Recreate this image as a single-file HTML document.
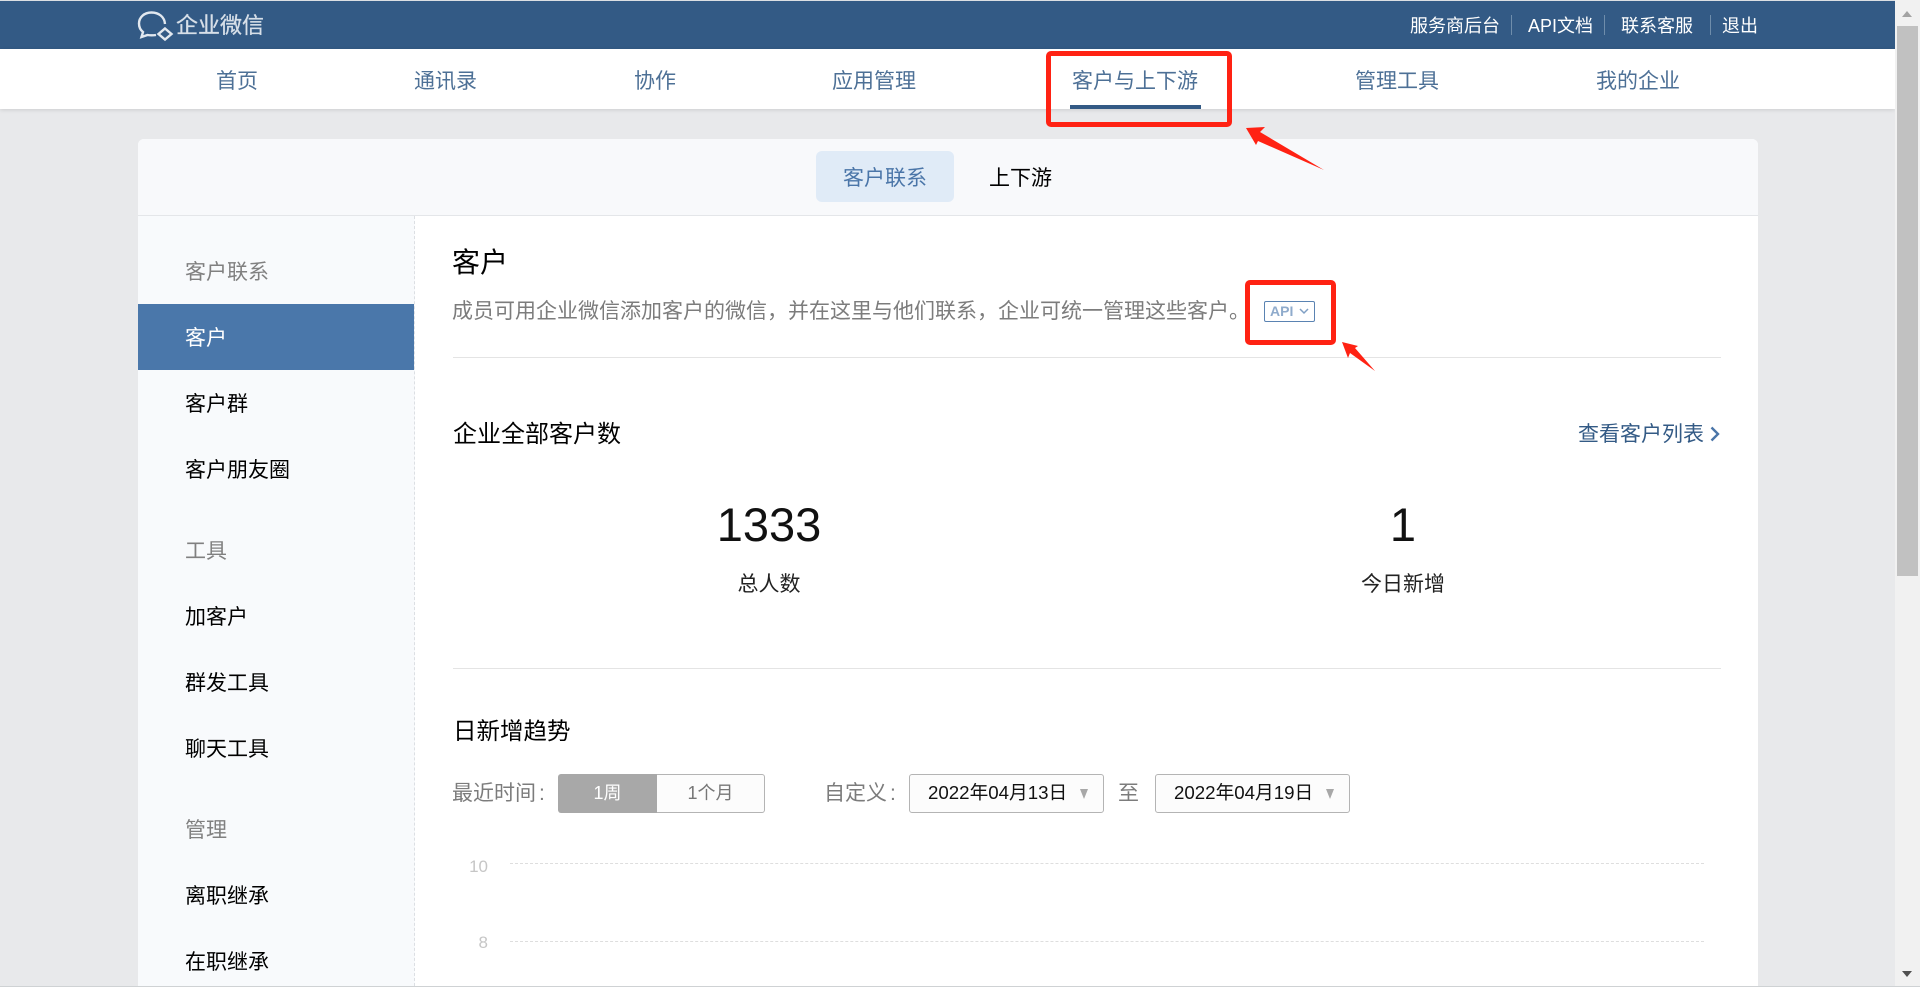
<!DOCTYPE html>
<html lang="zh-CN">
<head>
<meta charset="utf-8">
<title>企业微信</title>
<style>
html,body{margin:0;padding:0;width:1920px;height:987px;overflow:hidden;background:#e8e9eb}
body{position:relative;font-family:"Liberation Sans","Noto Sans CJK SC",sans-serif;font-size:21px;color:#000}
div,span,a{position:absolute;display:block}
.t{white-space:nowrap;line-height:30px;height:30px}
.nav{color:#4d7096}
.top{color:#fff;font-size:18px}
.sep{width:1px;height:20px;top:15px;background:#6f8dab}
.sl{color:#808080;left:185px}
.si{color:#000;left:185px}
.hr{left:453px;width:1268px;height:1px;background:#e4e4e4}
.btn{box-sizing:border-box;top:774px;height:39px;line-height:37px;text-align:center;font-size:18px}
.date{box-sizing:border-box;top:774px;height:39px;width:195px;border:1px solid #b4b4b4;border-radius:3px;background:#fcfcfc}
.date .d{left:18px;top:-1px;line-height:37px;font-size:18.7px;white-space:nowrap;color:#111}
.date .a{left:170px;top:14px;width:0;height:0;border-left:4px solid transparent;border-right:4px solid transparent;border-top:10px solid #a8a8a8}
.dash{left:510px;width:1194px;height:0;border-top:1px dashed #dedede}
.yl{color:#c6c6c6;font-size:17px;text-align:right;width:30px;left:458px}
.red{box-sizing:border-box;border:5px solid #ff2213;border-radius:5px}
.num{font-size:47px;color:#111;line-height:60px;height:60px;width:400px;text-align:center}
b{font-weight:normal;margin-left:3px}
</style>
</head>
<body>
<div style="left:0;top:0;width:1895px;height:1px;background:#dcdfe3"></div>
<div style="left:0;top:1px;width:1895px;height:48px;background:#335a85"></div>
<div style="left:0;top:49px;width:1895px;height:60px;background:#fff;box-shadow:0 1px 4px rgba(0,0,0,.12)"></div>

<svg style="position:absolute;left:136px;top:9px" width="40" height="34" viewBox="0 0 40 34">
<path d="M29 15C28.500 8 23 3.500 15.500 3.500C8 3.500 3 8.500 3 14.500C3 18.500 4.500 21 7 23L5.500 28L11.500 26C14.500 26.500 17 26.500 20 26" fill="none" stroke="#e2e8ef" stroke-width="2.400"/>
<path d="M29 19.500L35.500 25L29 30.500L22.500 25Z" fill="none" stroke="#e2e8ef" stroke-width="2.400"/>
</svg>
<span class="t" style="left:176px;top:11px;color:#d7dfe8;font-size:22px;-webkit-text-stroke:.3px #d7dfe8">企业微信</span>

<span class="t top" style="left:1410px;top:11px">服务商后台</span>
<span class="sep" style="left:1511px"></span>
<span class="t top" style="left:1528px;top:11px">API文档</span>
<span class="sep" style="left:1604px"></span>
<span class="t top" style="left:1621px;top:11px">联系客服</span>
<span class="sep" style="left:1710px"></span>
<span class="t top" style="left:1722px;top:11px">退出</span>

<span class="t nav" style="left:216px;top:67px">首页</span>
<span class="t nav" style="left:414px;top:67px">通讯录</span>
<span class="t nav" style="left:634px;top:67px">协作</span>
<span class="t nav" style="left:832px;top:67px">应用管理</span>
<span class="t nav" style="left:1072px;top:67px">客户与上下游</span>
<span class="t nav" style="left:1355px;top:67px">管理工具</span>
<span class="t nav" style="left:1596px;top:67px">我的企业</span>
<div style="left:1070px;top:105px;width:131px;height:4px;background:#335a85"></div>

<!-- card -->
<div style="left:138px;top:139px;width:1620px;height:847px;background:#fff;border-radius:6px 6px 0 0;overflow:hidden">
  <div style="left:0;top:0;width:1620px;height:76px;background:#f8f9fb;border-bottom:1px solid #e4e6e9"></div>
  <div style="left:0;top:77px;width:276px;height:770px;background:#f8fafc;border-right:1px dashed #dcdfe3"></div>
  <div style="left:0;top:165px;width:276px;height:66px;background:#4a77aa"></div>
</div>

<div style="left:816px;top:151px;width:138px;height:51px;background:#e0ebf7;border-radius:6px"></div>
<span class="t" style="left:843px;top:164px;color:#4a75a8">客户联系</span>
<span class="t" style="left:989px;top:164px">上下游</span>

<span class="t sl" style="top:258px">客户联系</span>
<span class="t" style="left:185px;top:324px;color:#fff">客户</span>
<span class="t si" style="top:390px">客户群</span>
<span class="t si" style="top:456px">客户朋友圈</span>
<span class="t sl" style="top:537px">工具</span>
<span class="t si" style="top:603px">加客户</span>
<span class="t si" style="top:669px">群发工具</span>
<span class="t si" style="top:735px">聊天工具</span>
<span class="t sl" style="top:816px">管理</span>
<span class="t si" style="top:882px">离职继承</span>
<span class="t si" style="top:948px">在职继承</span>

<span class="t" style="left:452px;top:248px;font-size:28px">客户</span>
<span class="t" style="left:452px;top:297px;color:#7c7c7c;font-size:21px">成员可用企业微信添加客户的微信&#65292;并在这里与他们联系&#65292;企业可统一管理这些客户。</span>
<div style="box-sizing:border-box;left:1264px;top:301px;width:51px;height:21px;border:1.500px solid #5a83b2;border-radius:2px;background:#fff"></div>
<span class="t" style="left:1270px;top:296px;font-size:14px;font-weight:bold;color:#8fabcc">API</span>
<svg style="position:absolute;left:1298px;top:307px" width="12" height="8" viewBox="0 0 12 8"><path d="M2 2L6 6l4-4" fill="none" stroke="#7f9fc4" stroke-width="1.500"/></svg>
<div class="hr" style="top:357px"></div>

<span class="t" style="left:453px;top:420px;font-size:24px">企业全部客户数</span>
<span class="t" style="left:1578px;top:420px;color:#335a85">查看客户列表</span>
<svg style="position:absolute;left:1708px;top:425px" width="14" height="18" viewBox="0 0 14 18"><path d="M3.500 2.500L10 9l-6.500 6.500" fill="none" stroke="#4a75a8" stroke-width="2.400"/></svg>

<span class="t num" style="left:569px;top:495px">1333</span>
<span class="t num" style="left:1203px;top:495px">1</span>
<span class="t" style="left:569px;top:570px;width:400px;text-align:center;color:#222">总人数</span>
<span class="t" style="left:1203px;top:570px;width:400px;text-align:center;color:#222">今日新增</span>
<div class="hr" style="top:668px"></div>

<span class="t" style="left:453px;top:716px;font-size:23.500px">日新增趋势</span>

<span class="t" style="left:452px;top:779px;color:#7c7c7c">最近时间<b>:</b></span>
<div class="btn" style="left:558px;width:99px;background:#a8a8a8;color:#fff;border-radius:3px 0 0 3px;line-height:39px">1周</div>
<div class="btn" style="left:657px;width:108px;background:#fcfcfc;color:#777;border:1px solid #b4b4b4;border-left:0;border-radius:0 3px 3px 0">1个月</div>
<span class="t" style="left:824px;top:779px;color:#7c7c7c">自定义<b>:</b></span>
<div class="date" style="left:909px"><span class="d">2022年04月13日</span><span class="a"></span></div>
<span class="t" style="left:1118px;top:779px;color:#7c7c7c">至</span>
<div class="date" style="left:1155px"><span class="d">2022年04月19日</span><span class="a"></span></div>

<span class="t yl" style="top:852px">10</span>
<div class="dash" style="top:863px"></div>
<span class="t yl" style="top:928px">8</span>
<div class="dash" style="top:941px"></div>

<!-- annotations -->
<div class="red" style="left:1046px;top:51px;width:186px;height:76px"></div>
<div class="red" style="left:1245px;top:280px;width:91px;height:65px"></div>
<svg style="position:absolute;left:0;top:0" width="1920" height="987" viewBox="0 0 1920 987">
<polygon points="1246,128 1265,127 1260,132 1324,170 1258,141 1256,145" fill="#ff2213"/>
<polygon points="1342,342 1358,346 1355,348 1375,371 1350,353 1348,358" fill="#ff2213"/>
</svg>

<!-- scrollbar -->
<div style="left:1895px;top:0;width:25px;height:986px;background:#f1f1f1"></div>
<div style="left:1897px;top:26px;width:21px;height:550px;background:#c1c1c1"></div>
<div style="left:1902px;top:11px;width:0;height:0;border-left:5.500px solid transparent;border-right:5.500px solid transparent;border-bottom:6px solid #a3a3a3"></div>
<div style="left:1902px;top:971px;width:0;height:0;border-left:5.500px solid transparent;border-right:5.500px solid transparent;border-top:6px solid #505050"></div>
<div style="left:0;top:986px;width:1920px;height:1px;background:#cfd2d4"></div>
</body>
</html>
